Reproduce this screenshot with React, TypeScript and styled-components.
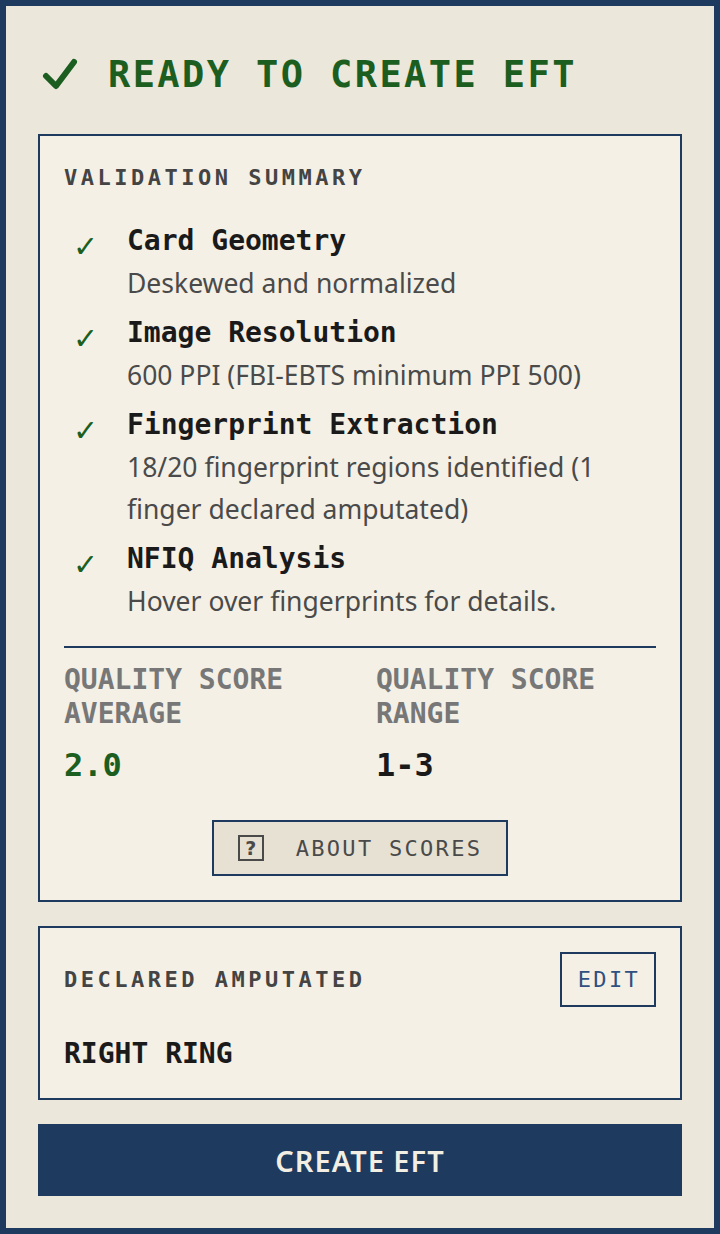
import React from 'react';
import styled, { createGlobalStyle } from 'styled-components';

const GlobalStyle = createGlobalStyle`
  html, body {
    margin: 0;
    padding: 0;
    background: #1f3a5f;
  }
  * {
    box-sizing: border-box;
  }
`;

const mono = `"DejaVu Sans Mono", "Liberation Mono", monospace`;
const sans = `"Noto Sans", "Open Sans", sans-serif`;

const Frame = styled.div`
  min-height: 1234px;
  border: 6px solid #1f3a5f;
  background: #ebe7db;
  padding: 32px;
  display: flex;
  flex-direction: column;
  gap: 24px;
`;

const Title = styled.h1`
  margin: 0;
  height: 72px;
  display: flex;
  align-items: center;
  gap: 30px;
  padding-left: 4px;
  font-family: ${mono};
  font-size: 37px;
  font-weight: 700;
  letter-spacing: 2.4px;
  color: #1b5e20;
`;

const Card = styled.section`
  background: #f4f0e6;
  border: 2px solid #1f3a5f;
  padding: 24px;
`;

const Heading = styled.h2`
  margin: 0;
  font-family: ${mono};
  font-size: 22px;
  line-height: 36px;
  font-weight: 700;
  letter-spacing: 3.5px;
  color: #444;
`;

const CheckList = styled.ul`
  list-style: none;
  margin: 24px 0 0;
  padding: 0;
  display: flex;
  flex-direction: column;
  gap: 8px;
`;

const CheckItem = styled.li`
  display: grid;
  grid-template-columns: 63px 1fr;
`;

const Tick = styled.span`
  padding-left: 9px;
  padding-top: 6px;
  font-family: "DejaVu Sans", sans-serif;
  font-size: 30px;
  font-weight: 700;
  line-height: 42px;
  color: #1b5e20;
`;

const ItemTitle = styled.div`
  font-family: ${mono};
  font-size: 28px;
  line-height: 42px;
  font-weight: 700;
  color: #1a1a1a;
`;

const ItemText = styled.div`
  font-family: ${sans};
  font-size: 26.5px;
  line-height: 42px;
  color: #4a4a4a;
`;

const Divider = styled.hr`
  margin: 24px 0 15px;
  border: none;
  height: 2px;
  background: #1f3a5f;
`;

const Stats = styled.div`
  display: grid;
  grid-template-columns: 1fr 1fr;
  column-gap: 32px;
`;

const StatLabel = styled.div`
  font-family: ${mono};
  font-size: 28px;
  line-height: 34px;
  font-weight: 700;
  color: #777;
`;

const StatValue = styled.div<{ $tone: 'good' | 'plain' }>`
  margin-top: 12px;
  font-family: ${mono};
  font-size: 32px;
  line-height: 44px;
  font-weight: 700;
  color: ${(p) => (p.$tone === 'good' ? '#1b5e20' : '#1a1a1a')};
`;

const Center = styled.div`
  display: flex;
  justify-content: center;
  margin-top: 33px;
`;

const OutlineButton = styled.button<{ $tone: 'grey' | 'blue' }>`
  display: flex;
  align-items: center;
  justify-content: center;
  gap: 32px;
  height: ${(p) => (p.$tone === 'grey' ? '56px' : '55px')};
  padding: ${(p) => (p.$tone === 'grey' ? '0 24px 0 24px' : '0 14px 0 16px')};
  border: 2px solid #1f3a5f;
  background: ${(p) => (p.$tone === 'grey' ? '#e6e1d3' : 'transparent')};
  font-family: ${mono};
  font-size: 22px;
  font-weight: 400;
  letter-spacing: 2.3px;
  color: ${(p) => (p.$tone === 'grey' ? '#4a4a4a' : '#2f5080')};
  cursor: pointer;
`;

const HelpIcon = styled.span`
  display: inline-flex;
  align-items: center;
  justify-content: center;
  width: 26px;
  height: 26px;
  border: 2px solid #4a4a4a;
  font-family: "DejaVu Sans", sans-serif;
  font-size: 19px;
  font-weight: 700;
  letter-spacing: 0;
  color: #4a4a4a;
`;

const HeaderRow = styled.div`
  display: flex;
  align-items: center;
  justify-content: space-between;
`;

const Declared = styled.div`
  margin-top: 27px;
  font-family: ${mono};
  font-size: 28px;
  line-height: 40px;
  font-weight: 700;
  color: #1a1a1a;
`;

const PrimaryButton = styled.button`
  height: 72px;
  border: none;
  background: #1f3a5f;
  color: #f2eee3;
  font-family: ${sans};
  font-size: 29px;
  font-weight: 600;
  letter-spacing: 1px;
  cursor: pointer;
`;

const checks = [
  { title: 'Card Geometry', text: 'Deskewed and normalized' },
  { title: 'Image Resolution', text: '600 PPI (FBI-EBTS minimum PPI 500)' },
  {
    title: 'Fingerprint Extraction',
    text: '18/20 fingerprint regions identified (1 finger declared amputated)',
  },
  { title: 'NFIQ Analysis', text: 'Hover over fingerprints for details.' },
];

const App = () => {
  return (
    <>
      <GlobalStyle />
      <Frame>
        <Title>
          <svg width="36" height="32" viewBox="0 0 36 32">
            <polyline
              points="4,18 14,28 32,4"
              fill="none"
              stroke="#1b5e20"
              strokeWidth="6"
              strokeLinecap="round"
              strokeLinejoin="round"
            />
          </svg>
          READY TO CREATE EFT
        </Title>

        <Card>
          <Heading>VALIDATION SUMMARY</Heading>
          <CheckList>
            {checks.map((c) => (
              <CheckItem key={c.title}>
                <Tick>✓</Tick>
                <div>
                  <ItemTitle>{c.title}</ItemTitle>
                  <ItemText>{c.text}</ItemText>
                </div>
              </CheckItem>
            ))}
          </CheckList>
          <Divider />
          <Stats>
            <div>
              <StatLabel>QUALITY SCORE AVERAGE</StatLabel>
              <StatValue $tone="good">2.0</StatValue>
            </div>
            <div>
              <StatLabel>QUALITY SCORE RANGE</StatLabel>
              <StatValue $tone="plain">1-3</StatValue>
            </div>
          </Stats>
          <Center>
            <OutlineButton $tone="grey">
              <HelpIcon>?</HelpIcon>
              ABOUT SCORES
            </OutlineButton>
          </Center>
        </Card>

        <Card>
          <HeaderRow>
            <Heading>DECLARED AMPUTATED</Heading>
            <OutlineButton $tone="blue">EDIT</OutlineButton>
          </HeaderRow>
          <Declared>RIGHT RING</Declared>
        </Card>

        <PrimaryButton>CREATE EFT</PrimaryButton>
      </Frame>
    </>
  );
};

export default App;
